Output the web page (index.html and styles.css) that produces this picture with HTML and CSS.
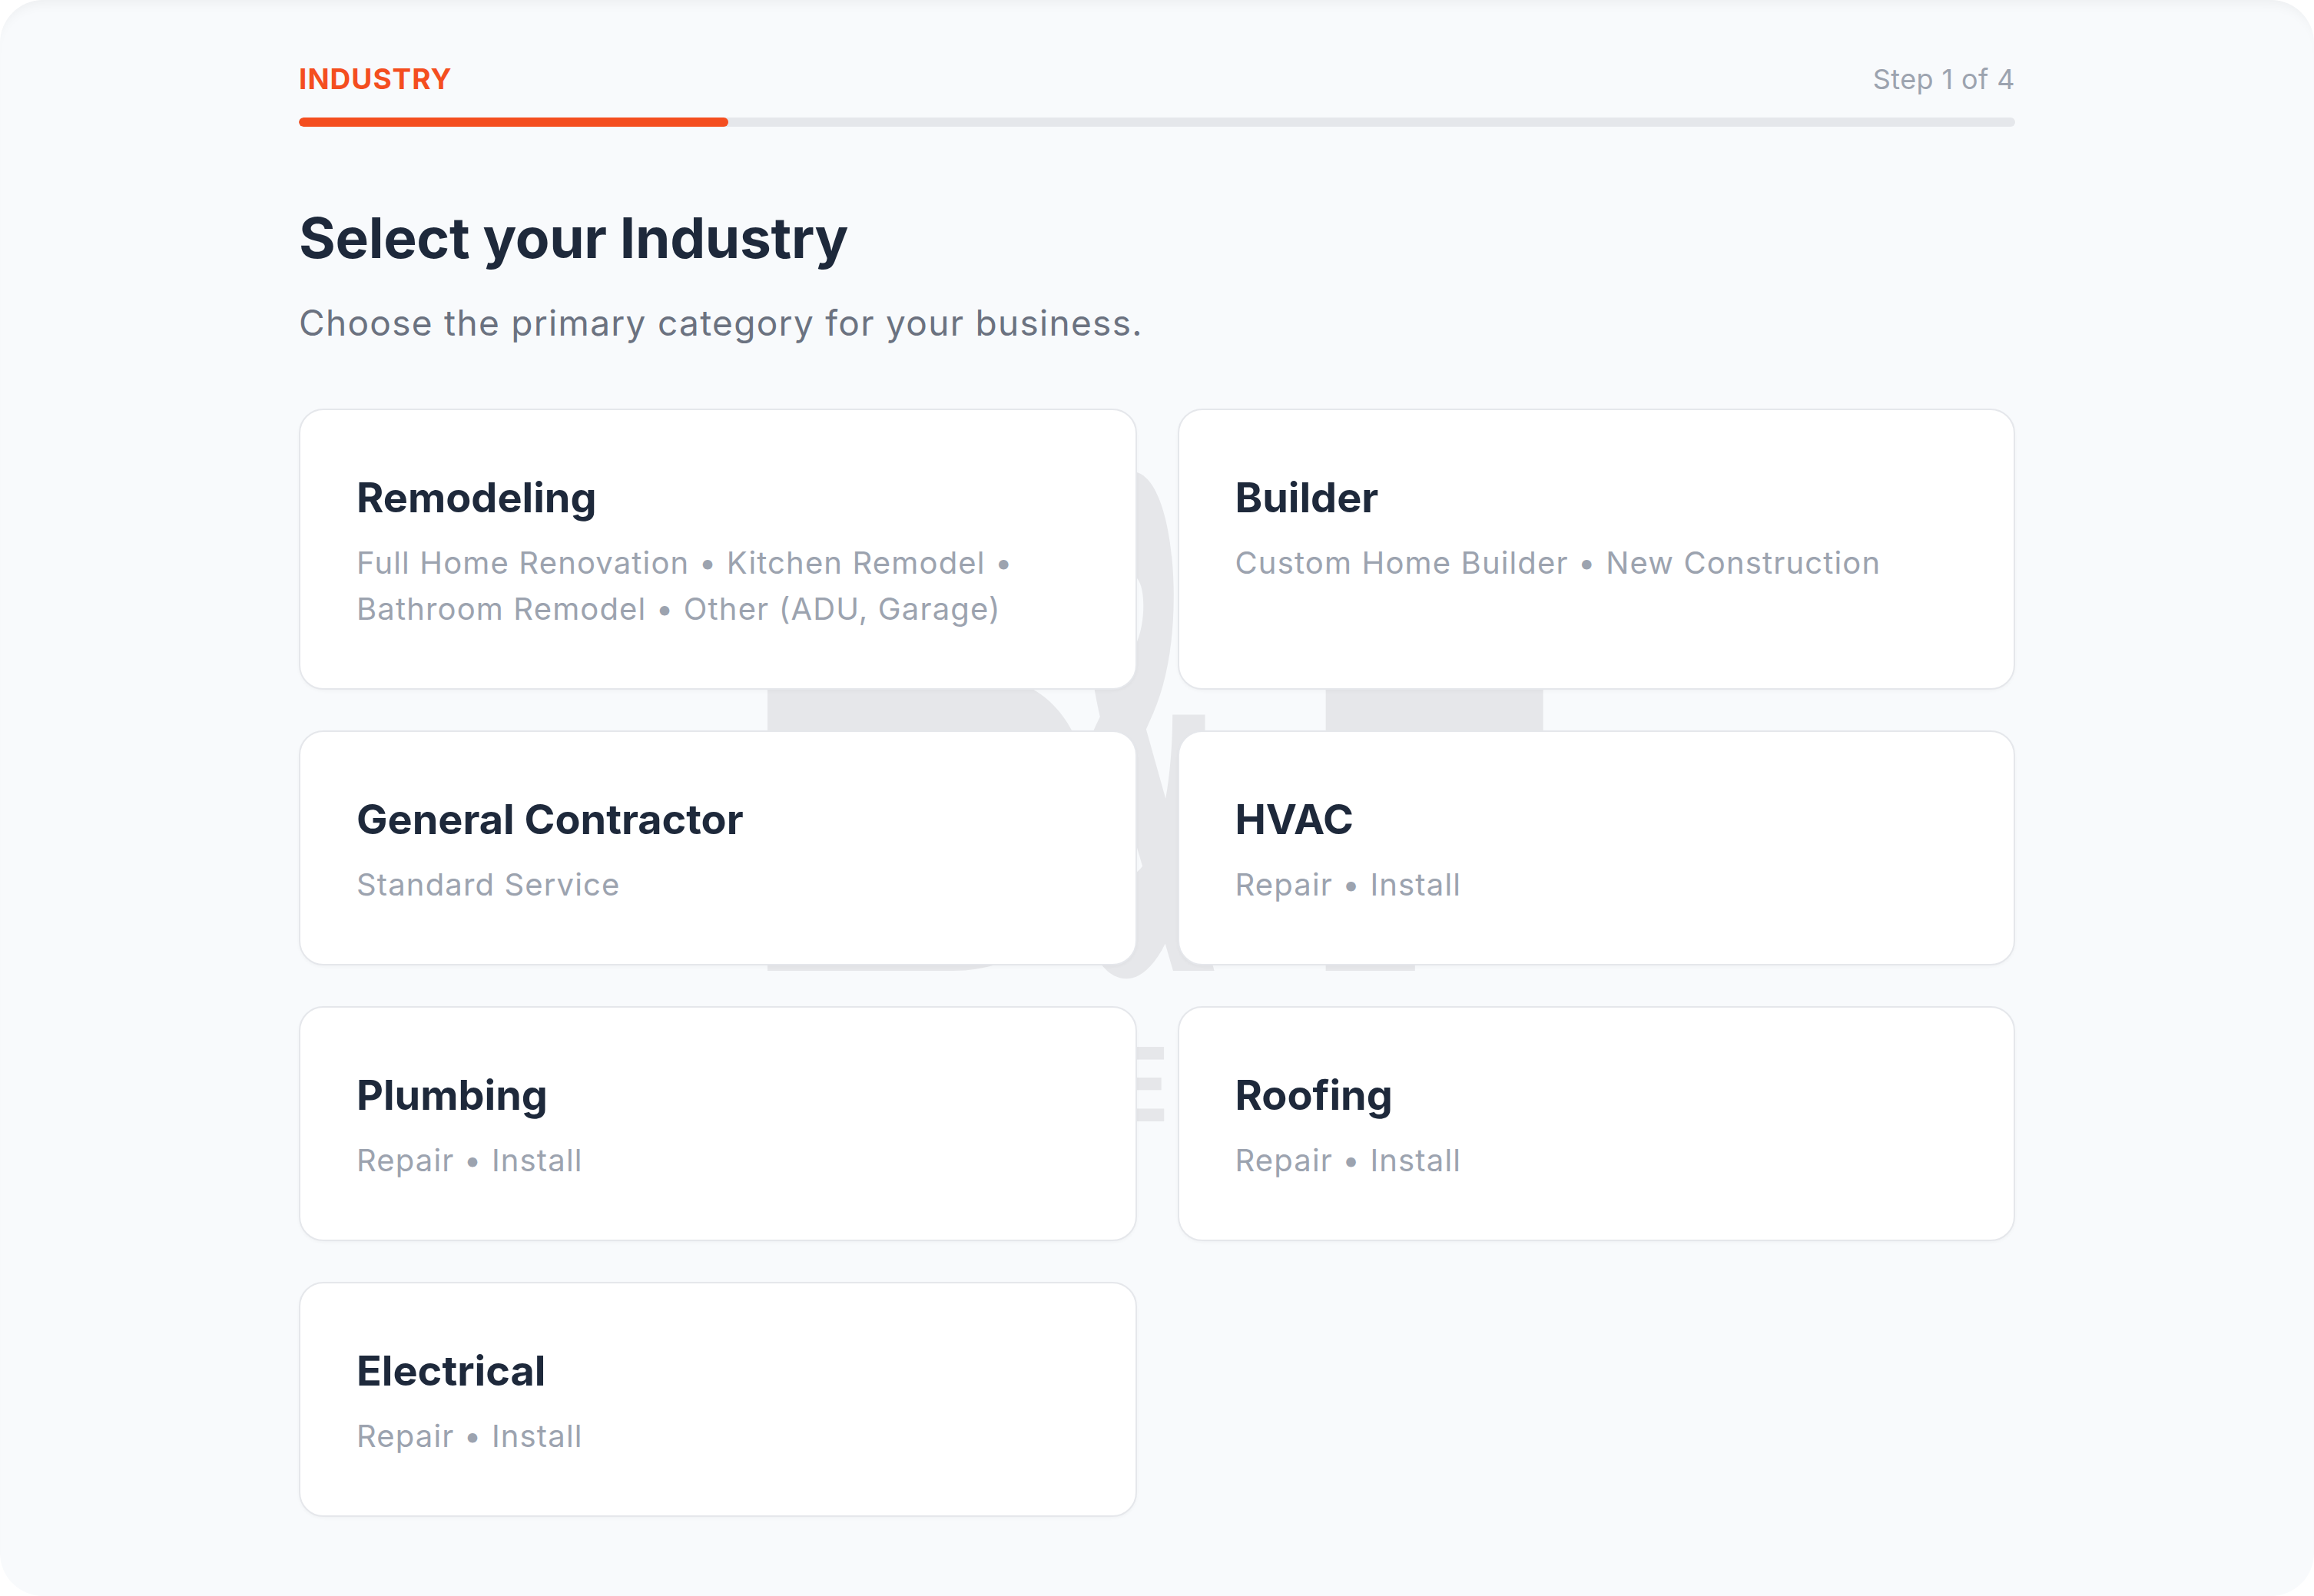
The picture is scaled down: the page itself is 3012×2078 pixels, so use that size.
FILE: index.html
```html
<!DOCTYPE html>
<html lang="en">
<head>
    <meta charset="UTF-8">
    <meta name="viewport" content="width=device-width, initial-scale=1.0">
    <title>Select your Industry</title>
    <link rel="stylesheet" href="styles.css">
</head>
<body>
    <div class="panel">
        <div class="wizard">
            <div class="step-head">
                <span class="step-name">INDUSTRY</span>
                <span class="step-count">Step 1 of 4</span>
            </div>
            <div class="progress">
                <div class="progress-fill" style="width: 25%;"></div>
            </div>

            <h1>Select your Industry</h1>
            <p class="lead">Choose the primary category for your business.</p>

            <div class="options">
                <svg class="watermark" width="2234" height="1443" viewBox="0 0 2234 1443" aria-hidden="true">
                    <text x="577" y="732" font-size="1000" textLength="470" lengthAdjust="spacingAndGlyphs">B</text>
                    <text x="1000" y="732" font-size="880" textLength="190" lengthAdjust="spacingAndGlyphs">&amp;</text>
                    <text x="1309" y="732" font-size="1000" textLength="344" lengthAdjust="spacingAndGlyphs">F</text>
                    <text x="1052" y="928" font-size="134" class="watermark-small">E</text>
                </svg>

                <div class="card">
                    <h2>Remodeling</h2>
                    <p>Full Home Renovation &bull; Kitchen Remodel &bull; Bathroom Remodel &bull; Other (ADU, Garage)</p>
                </div>
                <div class="card">
                    <h2>Builder</h2>
                    <p>Custom Home Builder &bull; New Construction</p>
                </div>
                <div class="card">
                    <h2>General Contractor</h2>
                    <p>Standard Service</p>
                </div>
                <div class="card">
                    <h2>HVAC</h2>
                    <p>Repair &bull; Install</p>
                </div>
                <div class="card">
                    <h2>Plumbing</h2>
                    <p>Repair &bull; Install</p>
                </div>
                <div class="card">
                    <h2>Roofing</h2>
                    <p>Repair &bull; Install</p>
                </div>
                <div class="card">
                    <h2>Electrical</h2>
                    <p>Repair &bull; Install</p>
                </div>
            </div>
        </div>
    </div>
</body>
</html>
```

FILE: styles.css
```css
* {
    margin: 0;
    padding: 0;
    box-sizing: border-box;
    font-family: 'Inter', 'Noto Sans', 'Liberation Sans', sans-serif;
}

body {
    background: #fff;
    width: 3012px;
    height: 2078px;
    overflow: hidden;
}

.panel {
    width: 100%;
    height: 100%;
    background: #f8fafc;
    border-radius: 56px;
    box-shadow: inset 0 14px 18px -12px rgba(0, 0, 0, 0.06);
}

.wizard {
    width: 2234px;
    margin: 0 auto;
    padding-top: 81px;
}

.step-head {
    display: flex;
    justify-content: space-between;
    align-items: baseline;
    line-height: 1.2;
}

.step-name {
    color: #f44e1f;
    font-size: 37px;
    font-weight: 700;
    letter-spacing: 1px;
}

.step-count {
    color: #9ca3af;
    font-size: 36px;
    letter-spacing: 0.4px;
}

.progress {
    height: 12px;
    margin-top: 28px;
    border-radius: 6px;
    background: #e5e7eb;
    overflow: hidden;
}

.progress-fill {
    height: 100%;
    border-radius: 6px;
    background: #f44e1f;
}

h1 {
    margin-top: 101px;
    color: #1e293b;
    font-size: 73px;
    font-weight: 700;
    line-height: 1.2;
    letter-spacing: -0.3px;
}

.lead {
    margin-top: 34px;
    color: #6b7280;
    font-size: 46px;
    line-height: 1.4;
    letter-spacing: 1.3px;
}

.options {
    position: relative;
    display: grid;
    grid-template-columns: 1fr 1fr;
    gap: 53px;
    margin-top: 80px;
}

.watermark {
    position: absolute;
    top: 0;
    left: 0;
    overflow: visible;
    fill: #e6e7ea;
    font-family: 'Inter', sans-serif;
    font-weight: 900;
}

.watermark-small {
    font-weight: 700;
}

.card {
    position: relative;
    background: #fff;
    border: 2px solid #e5e7eb;
    border-radius: 32px;
    padding: 79px 73px 73px;
    box-shadow: 0 2px 4px rgba(15, 23, 42, 0.03);
}

.card h2 {
    color: #1e293b;
    font-size: 54px;
    font-weight: 700;
    line-height: 70px;
}

.card p {
    margin-top: 20px;
    color: #9ca3af;
    font-size: 40px;
    line-height: 60px;
    letter-spacing: 1.15px;
}
```
